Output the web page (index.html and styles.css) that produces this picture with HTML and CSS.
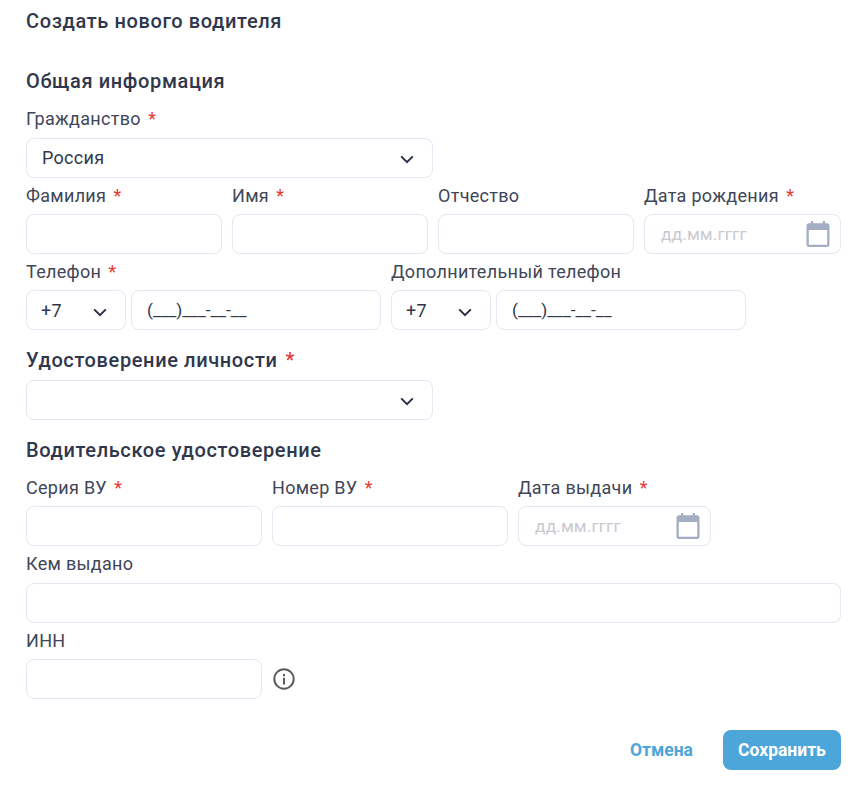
FILE: index.html
```html
<!DOCTYPE html>
<html lang="ru">
<head>
<meta charset="utf-8">
<title>Создать нового водителя</title>
<link rel="stylesheet" href="styles.css">
</head>
<body>
<svg class="defs" width="0" height="0" aria-hidden="true">
  <symbol id="chev" viewBox="0 0 14 9"><path d="M1.2 1.4 7 7.2l5.8-5.8" fill="none" stroke="currentColor" stroke-width="2"/></symbol>
  <symbol id="cal" viewBox="0 0 24 26"><path fill-rule="evenodd" d="M5 0h2.2v2.2h9.6V0H19v2.2h2A2.5 2.5 0 0 1 23.500 4.700v18.800A2.500 2.500 0 0 1 21 26H3A2.500 2.500 0 0 1 .5 23.500V4.700A2.500 2.500 0 0 1 3 2.200h2zM2.800 9v14.400c0 .2.1.3.3.3h17.800c.2 0 .3-.1.3-.3V9z" fill="currentColor"/></symbol>
</svg>
<main class="form">
  <h1 class="title">Создать нового водителя</h1>
  <h2 class="section section-first">Общая информация</h2>
  <label class="label label-citizen">Гражданство <span class="req">*</span></label>
  <div class="control select w-407"><span class="value">Россия</span><svg class="chev"><use href="#chev"/></svg></div>

  <div class="row gap-10">
    <div class="field w-196"><label class="label">Фамилия <span class="req">*</span></label><div class="control"></div></div>
    <div class="field w-196"><label class="label">Имя <span class="req">*</span></label><div class="control"></div></div>
    <div class="field w-196"><label class="label">Отчество</label><div class="control"></div></div>
    <div class="field w-197"><label class="label">Дата рождения <span class="req">*</span></label><div class="control date"><span class="placeholder">дд.мм.гггг</span><svg class="cal"><use href="#cal"/></svg></div></div>
  </div>

  <div class="row gap-10">
    <div class="field"><label class="label">Телефон <span class="req">*</span></label>
      <div class="phone"><div class="control code"><span>+7</span><svg class="chev"><use href="#chev"/></svg></div><div class="control num">(___)___-__-__</div></div>
    </div>
    <div class="field"><label class="label">Дополнительный телефон</label>
      <div class="phone"><div class="control code"><span>+7</span><svg class="chev"><use href="#chev"/></svg></div><div class="control num">(___)___-__-__</div></div>
    </div>
  </div>

  <h2 class="section section-id">Удостоверение личности <span class="req">*</span></h2>
  <div class="control select w-407"><span></span><svg class="chev"><use href="#chev"/></svg></div>

  <h2 class="section section-dl">Водительское удостоверение</h2>
  <div class="row gap-10">
    <div class="field w-236"><label class="label label-dl">Серия ВУ <span class="req">*</span></label><div class="control"></div></div>
    <div class="field w-236"><label class="label label-dl">Номер ВУ <span class="req">*</span></label><div class="control"></div></div>
    <div class="field w-193"><label class="label label-dl">Дата выдачи <span class="req">*</span></label><div class="control date"><span class="placeholder">дд.мм.гггг</span><svg class="cal"><use href="#cal"/></svg></div></div>
  </div>
  <label class="label label-who">Кем выдано</label>
  <div class="control"></div>
  <label class="label">ИНН</label>
  <div class="inn">
    <div class="control w-236"></div>
    <svg class="info" viewBox="0 0 22 22"><circle cx="11" cy="11" r="9.700" fill="none" stroke="currentColor" stroke-width="2"/><rect x="10" y="9.800" width="2" height="6.700" fill="currentColor"/><rect x="10" y="6" width="2" height="2.200" fill="currentColor"/></svg>
  </div>
  <div class="actions">
    <button class="btn btn-cancel" type="button">Отмена</button>
    <button class="btn btn-save" type="button">Сохранить</button>
  </div>
</main>
</body>
</html>
```
FILE: styles.css
```css
* { box-sizing: border-box; }
html, body { margin: 0; background: #fff; }
body { font-family: Roboto, sans-serif; color: #30374d; overflow: hidden; }
.defs { position: absolute; }
.form { width: 865px; height: 795px; padding: 0 24px 0 26px; display: flex; flex-direction: column; }
.title { margin: 10px 0 0; font-size: 20px; line-height: 22px; font-weight: 500; letter-spacing: .62px; color: #30374d; }
.section { margin: 0; font-size: 20px; line-height: 22px; font-weight: 500; letter-spacing: .62px; color: #30374d; }
.section-first { margin-top: 38px; }
.section-id { margin-top: 19px; height: 31px; }
.section-dl { margin-top: 19px; }
.label { display: block; height: 36px; font-size: 18px; line-height: 36px; letter-spacing: .3px; color: #3f4657; white-space: nowrap; }
.label-citizen { height: 46px; line-height: 53px; }
.label-dl { height: 45px; line-height: 53px; }
.label-who { height: 37px; }
.req { color: #e53935; margin-left: 2.500px; }
.control { height: 40px; border: 1px solid #e4e6f2; border-radius: 8px; background: #fff; font-size: 18px; letter-spacing: .3px; color: #30374d; }
.select { display: flex; align-items: center; justify-content: space-between; padding: 0 18px 0 15px; }
.value { margin-top: -2px; }
.w-407 { width: 407px; }
.w-196 { width: 196px; }
.w-197 { width: 197px; }
.w-236 { width: 236px; }
.w-193 { width: 193px; }
.row { display: flex; }
.gap-10 { gap: 10px; }
.chev { width: 14px; height: 9px; color: #2a3144; margin-top: 2px; flex: none; }
.date { display: flex; align-items: center; justify-content: space-between; padding: 0 10px 0 16px; color: #c9cacf; }
.placeholder { font-size: 17.300px; letter-spacing: .1px; }
.cal { width: 24px; height: 26px; color: #a3aec2; flex: none; }
.phone { display: flex; gap: 5px; }
.code { width: 100px; display: flex; align-items: center; justify-content: space-between; padding: 0 18px 0 14px; }
.code .chev { margin-top: 5px; }
.num { width: 250px; padding: 0 15px; line-height: 38px; font-size: 17.300px; letter-spacing: 0; }
.inn { display: flex; align-items: center; gap: 11px; }
.info { width: 22px; height: 22px; color: #5c5c5c; }
.actions { display: flex; justify-content: flex-end; align-items: center; margin-top: 31px; }
.btn { border: 0; height: 40px; font: 700 17.500px/40px Roboto, sans-serif; background: none; padding: 0; }
.btn-cancel { color: #4da6da; margin-right: 30px; }
.btn-save { width: 118px; background: #4da6da; color: #fff; border-radius: 8px; }
```
